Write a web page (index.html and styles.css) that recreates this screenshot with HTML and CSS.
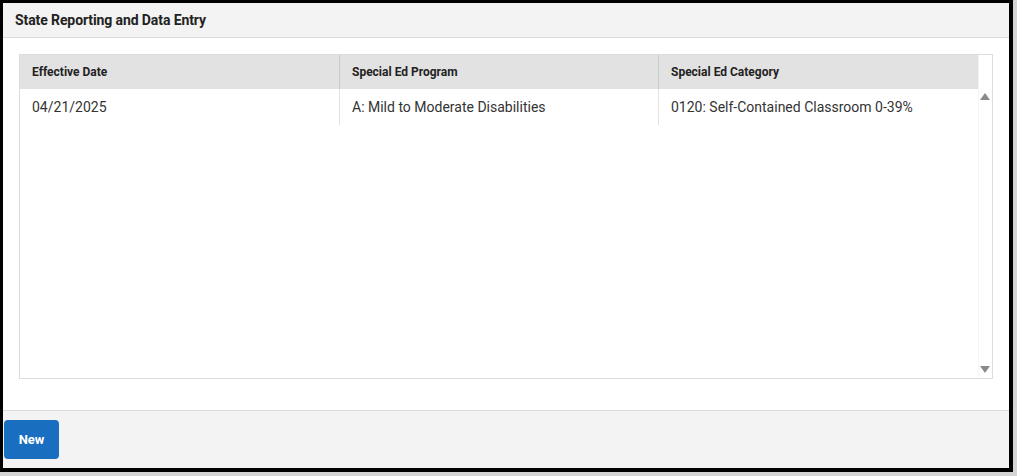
FILE: index.html
```html
<!DOCTYPE html>
<html>
<head>
<meta charset="utf-8">
<link rel="stylesheet" href="styles.css">
</head>
<body>
<div class="frame">
  <div class="panel-header">State Reporting and Data Entry</div>
  <div class="panel-body">
    <div class="grid">
      <div class="grid-main">
        <div class="row head">
          <div class="cell">Effective Date</div>
          <div class="cell">Special Ed Program</div>
          <div class="cell">Special Ed Category</div>
        </div>
        <div class="row">
          <div class="cell">04/21/2025</div>
          <div class="cell">A: Mild to Moderate Disabilities</div>
          <div class="cell">0120: Self-Contained Classroom 0-39%</div>
        </div>
      </div>
      <div class="scrollbar">
        <div class="sb-top"></div>
        <div class="arrow up"></div>
        <div class="sb-track"></div>
        <div class="arrow down"></div>
      </div>
    </div>
  </div>
  <div class="panel-footer">
    <button class="btn">New</button>
  </div>
</div>
</body>
</html>
```

FILE: styles.css
```css
* { box-sizing: border-box; }
html, body { margin: 0; padding: 0; }
body {
  background: #d4d4d4;
  font-family: Roboto, "Liberation Sans", Arial, sans-serif;
  color: #333;
  width: 1017px;
  height: 476px;
  overflow: hidden;
}
.frame {
  width: 1013px;
  height: 472px;
  border-style: solid;
  border-color: #000;
  border-width: 3px 4px 4px 3px;
  background: #fff;
  display: flex;
  flex-direction: column;
}
.panel-header {
  height: 35px;
  background: #f3f3f3;
  border-bottom: 1px solid #dcdcdc;
  padding: 0 12px;
  display: flex;
  align-items: center;
  font-size: 14px;
  font-weight: 700;
  color: #222;
  letter-spacing: -0.1px;
}
.panel-body {
  flex: 1;
  padding: 16px 16px 31px 16px;
}
.grid {
  height: 325px;
  border: 1px solid #dcdcdc;
  display: flex;
}
.grid-main { flex: 1; }
.row {
  display: grid;
  grid-template-columns: 319px 319px 1fr;
  height: 36px;
}
.row.head {
  height: 34px;
  background: #e2e2e2;
}
.cell {
  padding: 0 12px;
  display: flex;
  align-items: center;
  font-size: 14px;
  color: #333;
}
.row.head .cell {
  font-size: 12px;
  font-weight: 700;
  color: #222;
}
.cell + .cell { border-left: 1px solid #e2e2e2; }
.row.head .cell + .cell { border-left: 1px solid #c9c9c9; }
.scrollbar {
  width: 14px;
  display: flex;
  flex-direction: column;
  align-items: center;
  background: #fff;
  border-left: 1px solid #f4f4f4;
}
.sb-top { height: 38px; width: 100%; }
.sb-track { flex: 1; }
.arrow {
  width: 0;
  height: 0;
  border-left: 5px solid transparent;
  border-right: 5px solid transparent;
  margin-right: 2px;
}
.arrow.up { border-bottom: 7px solid #8a8a8a; }
.arrow.down { border-top: 7px solid #8a8a8a; margin-bottom: 5px; }
.panel-footer {
  height: 58px;
  background: #f3f3f3;
  border-top: 1px solid #dcdcdc;
  padding: 9px 0 0 1px;
}
.btn {
  width: 55px;
  height: 39px;
  background: #1a6ec0;
  border: none;
  border-radius: 4px;
  color: #fff;
  font-family: Roboto, "Liberation Sans", Arial, sans-serif;
  font-size: 13px;
  font-weight: 700;
  padding: 0;
}
```
